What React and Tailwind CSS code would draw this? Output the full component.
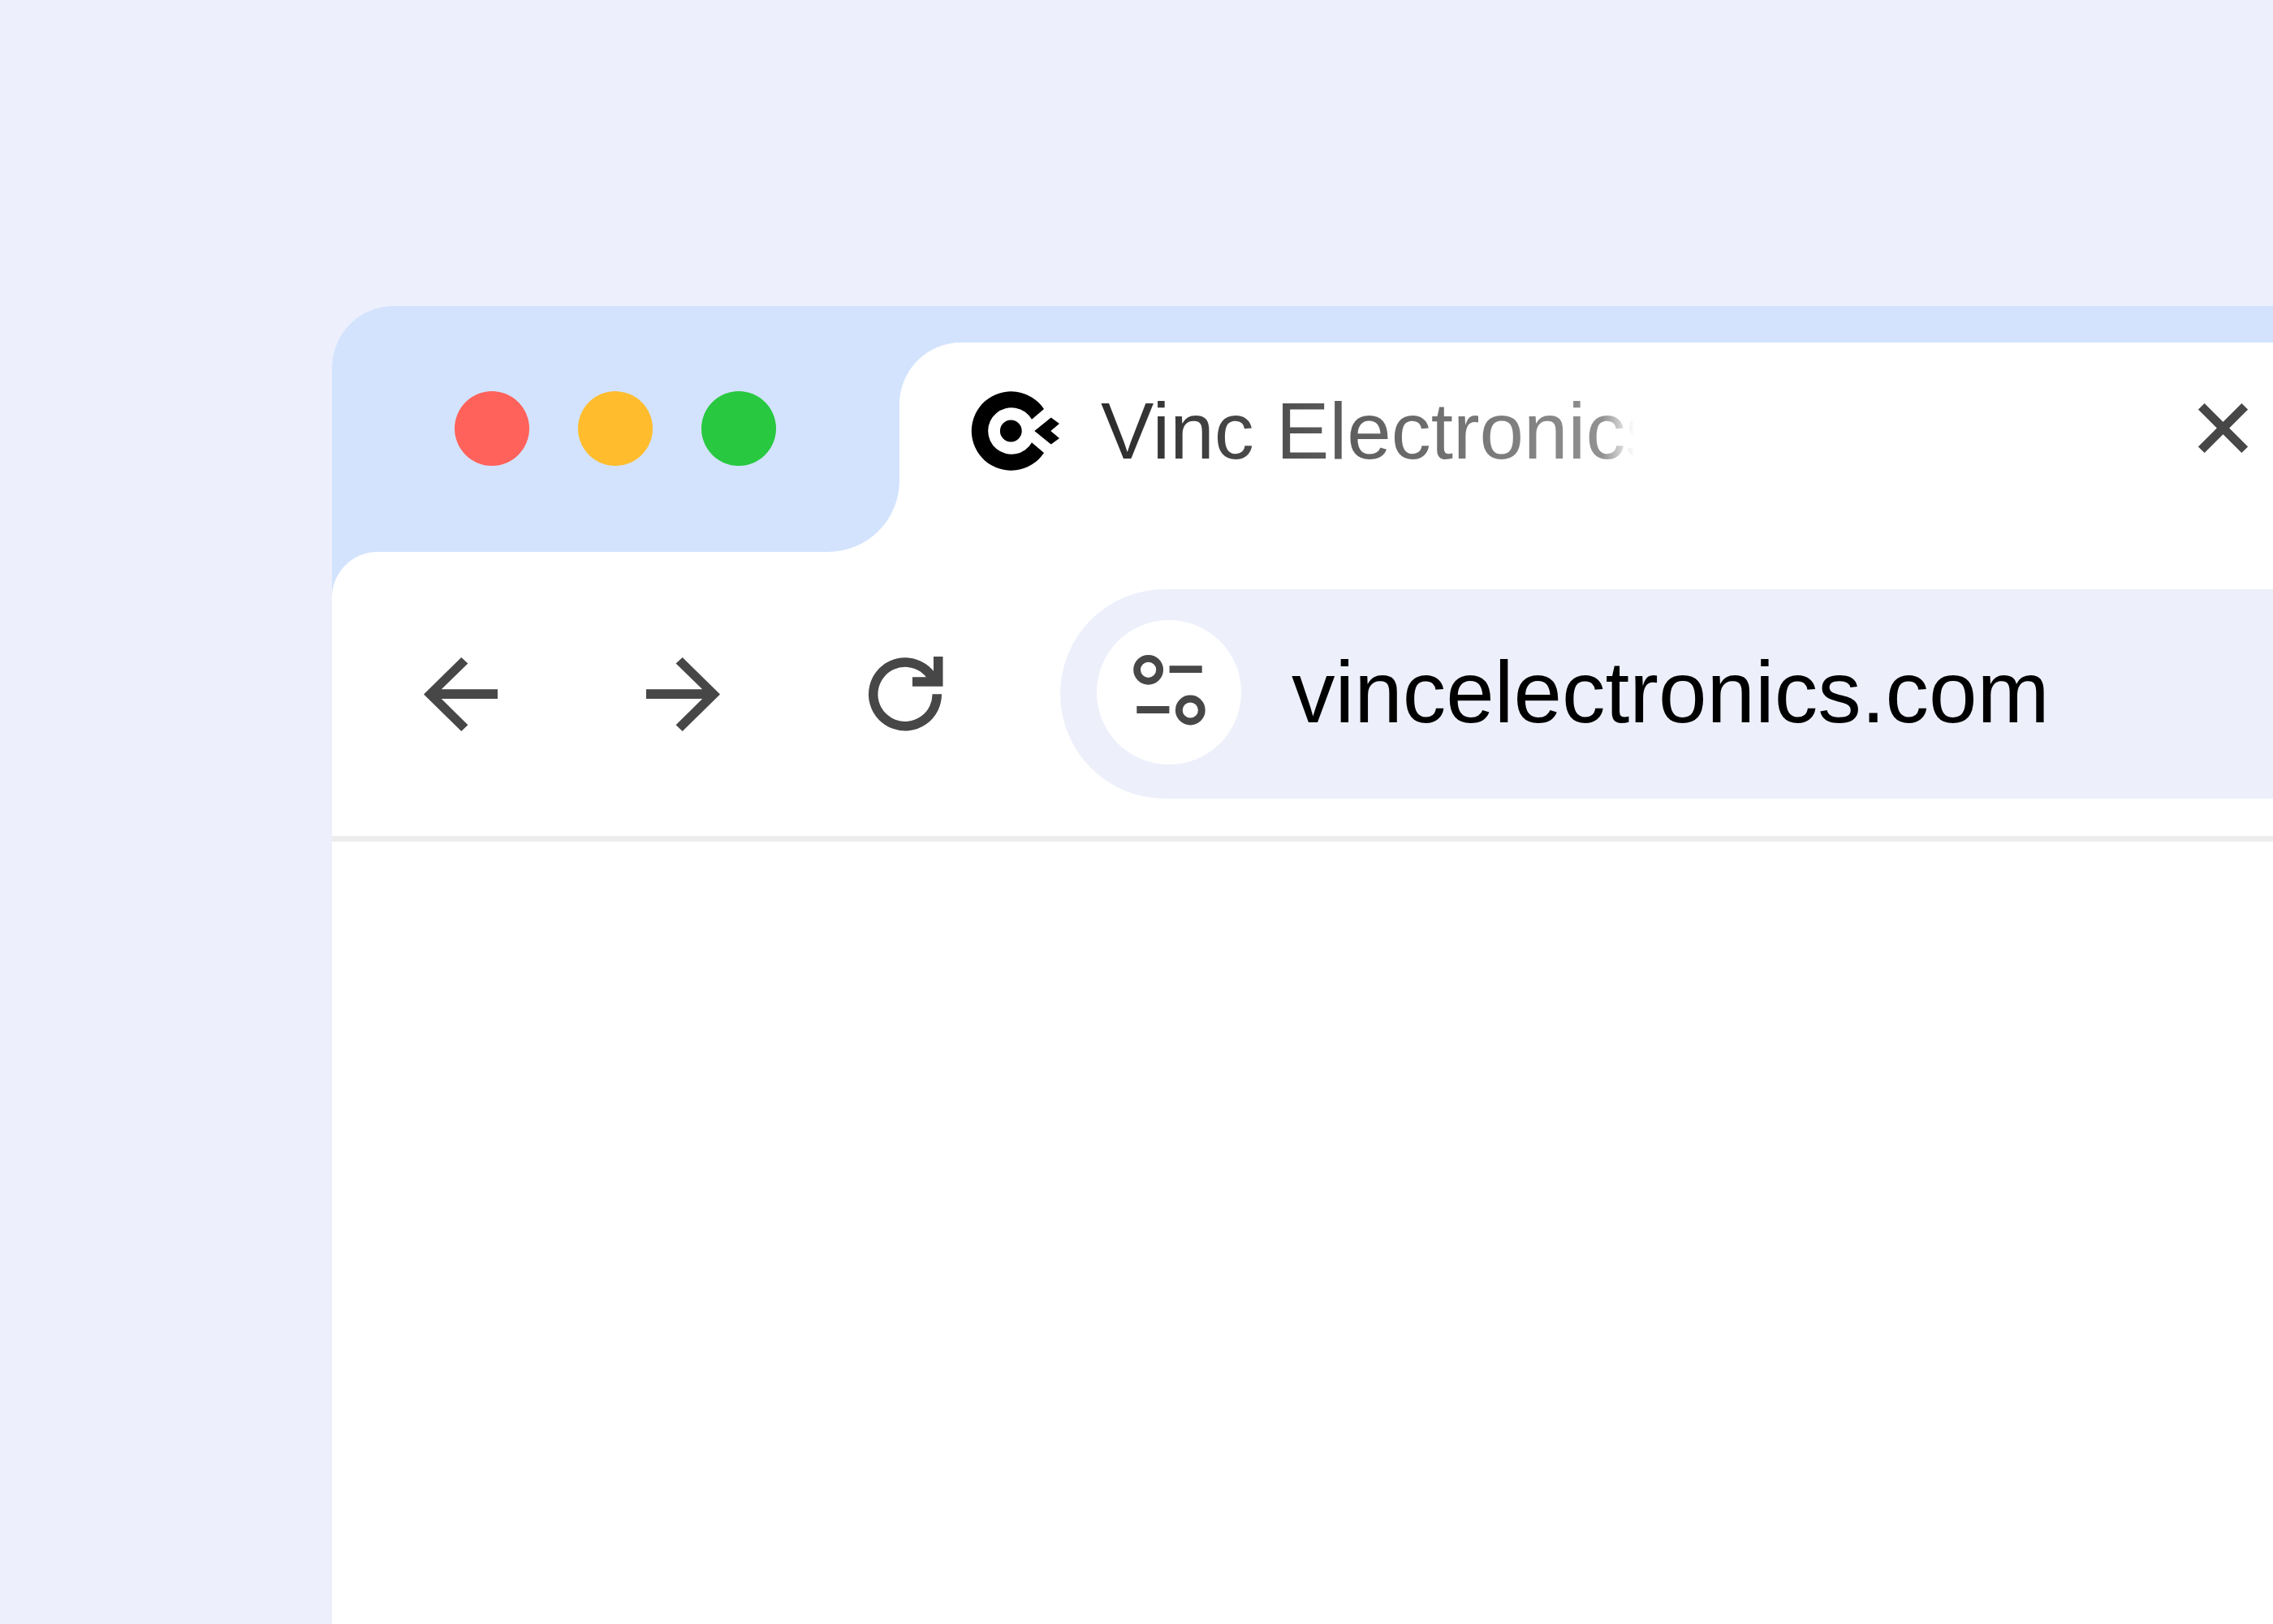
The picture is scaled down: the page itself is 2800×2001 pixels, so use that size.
function WindowControls() {
  return (
    <div className="flex shrink-0 bg-white">
      <div className="flex w-[699px] gap-[60px] rounded-br-[88px] bg-[#d3e3fd] pt-[60px] pl-[151px]">
        <button aria-label="Close window" className="size-[92px] rounded-full bg-[#ff625a]" />
        <button aria-label="Minimize window" className="size-[92px] rounded-full bg-[#ffbd2e]" />
        <button aria-label="Zoom window" className="size-[92px] rounded-full bg-[#28c840]" />
      </div>
    </div>
  );
}

function Logo() {
  return (
    <svg viewBox="0 0 110 98" className="h-[98px] w-[110px] shrink-0" aria-hidden="true">
      <path d="M90 22A48.7 48.7 0 1 0 90 76L75 63.2A28.8 28.8 0 1 1 75 34.8Z" />
      <circle cx="49.3" cy="49" r="13.4" />
      <path d="M78.3 49L98.7 32.6L109 40L98.3 49L109 58L98.7 65.4Z" />
    </svg>
  );
}

function Tab() {
  return (
    <div className="flex h-[258px] min-w-0 flex-1 items-center rounded-tl-[76px] bg-white pr-[31px] pb-[40px] pl-[88px]">
      <Logo />
      <span className="ml-[50px] w-[657px] shrink-0 overflow-hidden bg-linear-[90deg,#2b2b2b_0%,#919191_94%,#ffffff_100%] bg-clip-text text-[98px] leading-[120px] whitespace-nowrap text-transparent">
        Vinc Electronics
      </span>
      <button aria-label="Close tab" className="mb-[8px] ml-auto shrink-0">
        <svg viewBox="0 0 61 61" className="size-[61px]" fill="none" stroke="#474747" strokeWidth="10.8">
          <path d="M3.8 3.8L57.2 57.2M57.2 3.8L3.8 57.2" />
        </svg>
      </button>
    </div>
  );
}

function NavButton({ label, children }) {
  return (
    <button aria-label={label} className="shrink-0">
      <svg viewBox="0 0 91 91" className="size-[91px] overflow-visible" fill="#474747">
        {children}
      </svg>
    </button>
  );
}

function Toolbar() {
  return (
    <div className="bg-[#d3e3fd]">
      <div className="flex items-center rounded-tl-[56px] bg-white py-[46px] pl-[113px]">
        <nav className="flex shrink-0 gap-[183px]">
          <NavButton label="Back">
            <path d="M91 39.3H21.8L54.4 7.6L46.3 0L0 45.5L46.3 91L54.4 83.2L21.8 51H91Z" />
          </NavButton>
          <NavButton label="Forward">
            <path d="M0 39.3H69.2L36.6 7.6L44.7 0L91 45.5L44.7 91L36.6 83.2L69.2 51H0Z" />
          </NavButton>
          <NavButton label="Reload">
            <path
              d="M84.3 45.3A39.3 39.3 0 1 1 79 25.7"
              fill="none"
              stroke="#474747"
              strokeWidth="11.5"
            />
            <path d="M80 -1H91.5V35.7H54V24.3H80Z" />
          </NavButton>
        </nav>
        <div className="ml-[145px] flex min-w-0 flex-1 items-center rounded-l-full bg-[#edf0fb] pt-[38px] pb-[42px] pl-[45px]">
          <button aria-label="View site information" className="size-[178px] shrink-0 rounded-full bg-white">
            <svg viewBox="0 0 178 178" className="size-full" fill="none" stroke="#474747" strokeWidth="8.8">
              <circle cx="63.6" cy="61.3" r="14" />
              <path d="M89.6 60.7H129.7M49.3 110.5H89.4" />
              <circle cx="115.3" cy="111" r="14" />
            </svg>
          </button>
          <input
            type="text"
            aria-label="Address"
            defaultValue="vincelectronics.com"
            className="ml-[62px] min-w-0 flex-1 bg-transparent text-[107px] leading-[130px] text-black outline-none"
          />
        </div>
      </div>
    </div>
  );
}

export default function App() {
  return (
    <div className="flex min-h-screen flex-col bg-[#edf0fc] pt-[377px] pl-[409px] font-['Liberation_Sans',Arial,sans-serif]">
      <header>
        <div className="flex overflow-hidden rounded-tl-[76px] bg-[#d3e3fd] pt-[45px]">
          <WindowControls />
          <Tab />
        </div>
        <Toolbar />
      </header>
      <main className="flex-1 border-t-[7px] border-[#ededed] bg-white" />
    </div>
  );
}
